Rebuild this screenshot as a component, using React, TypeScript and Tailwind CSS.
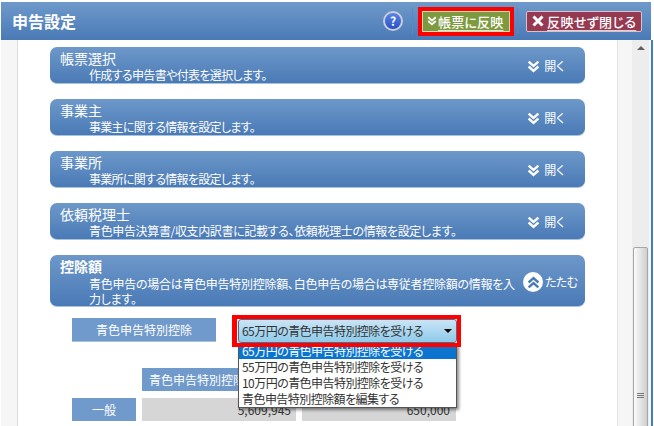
import React from "react";

const font = "[font-family:'Noto_Sans_CJK_JP','Noto_Sans',sans-serif] [font-feature-settings:'palt']";

function Chevrons({ up, className }: { up?: boolean; className?: string }) {
  return (
    <svg viewBox="0 0 12 12" className={className} fill="none" stroke="currentColor" strokeWidth="2.2">
      {up ? (
        <>
          <path d="M1.5 6 L6 2 L10.5 6" />
          <path d="M1.5 10.5 L6 6.5 L10.5 10.5" />
        </>
      ) : (
        <>
          <path d="M1.5 1.5 L6 5.5 L10.5 1.5" />
          <path d="M1.5 6 L6 10 L10.5 6" />
        </>
      )}
    </svg>
  );
}

function Section({ title, desc, track }: { title: string; desc: string; track: string }) {
  return (
    <div className="h-[37px] w-[535px] rounded-[7px] border-b border-[#a9c2de] bg-gradient-to-b from-[#6d98c9] to-[#4a7ab6] pl-[10px] pr-[21px] flex items-start justify-between text-white">
      <div className="flex flex-col">
        <div className="text-[14px] leading-[16px] mt-[3px]">{title}</div>
        <div className={`text-[12px] leading-[14px] ml-[29px] mt-[2px] ${track}`}>{desc}</div>
      </div>
      <div className="flex items-center gap-[4px] mt-[11px] text-[12px] tracking-[-0.3px] leading-[16px]">
        <Chevrons className="w-[13px] h-[13px]" />
        <span>開く</span>
      </div>
    </div>
  );
}

export default function App() {
  return (
    <div className={`w-[654px] h-[426px] overflow-hidden bg-white flex flex-col pt-[2px] pl-[1px] ${font}`}>
      <header className="h-[38px] w-[650px] shrink-0 bg-gradient-to-b from-[#6e99ca] to-[#4a7ab6] flex items-center pl-[11px] text-white">
        <h1 className="text-[16px] font-bold leading-none flex-1">申告設定</h1>
        <div className="w-[20px] h-[20px] rounded-full border-2 border-[#c9ced6] bg-gradient-to-b from-[#5a85ea] to-[#2a4fc4] text-[12px] font-bold leading-none flex items-center justify-center mr-[9px]">?</div>
        <div className="w-px h-[26px] bg-[#5f88ba] mr-[9px]" />
        <div className="outline-[4px] outline-[#ff0000] h-[21px] w-[88px] border border-[#cfd9b8] bg-[#7d9b3e] flex items-center pl-[4px] gap-[1px] text-[13px] tracking-[0.2px] font-medium leading-none mr-[7px]">
          <Chevrons className="w-[10px] h-[10px]" />
          <span className="underline underline-offset-[3px] decoration-[#dfe8c8]">帳票に反映</span>
        </div>
        <div className="w-px h-[26px] bg-[#5f88ba] mr-[8px]" />
        <div className="h-[21px] w-[116px] border border-[#d9c3cb] rounded-[2px] bg-[#963a52] flex items-center pl-[5px] gap-[3px] text-[13px] tracking-[0.4px] font-medium leading-none mr-[9px]">
          <svg viewBox="0 0 12 12" className="w-[12px] h-[12px] shrink-0" fill="none" stroke="currentColor" strokeWidth="3"><path d="M1.5 1.5 L10.5 10.5 M10.5 1.5 L1.5 10.5" /></svg>
          <span className="underline underline-offset-[3px] decoration-[#e6d0d6]">反映せず閉じる</span>
        </div>
      </header>
      <div className="flex flex-1 min-h-0 w-[652px]">
        <div className="w-[17px] shrink-0 bg-[#f6f6f6] border-r border-[#dcdcdc]" />
        <main className="w-[599px] shrink-0 pt-[7px] pl-[32px] flex flex-col">
          <div className="flex flex-col gap-[15px]">
            <Section track="tracking-[-0.65px]" title="帳票選択" desc="作成する申告書や付表を選択します。" />
            <Section track="tracking-[-0.7px]" title="事業主" desc="事業主に関する情報を設定します。" />
            <Section track="tracking-[-0.7px]" title="事業所" desc="事業所に関する情報を設定します。" />
            <Section track="tracking-[-0.35px]" title="依頼税理士" desc="青色申告決算書/収支内訳書に記載する、依頼税理士の情報を設定します。" />
            <div className="relative h-[52px] w-[535px] rounded-[7px] border-b border-[#a9c2de] bg-gradient-to-b from-[#6d98c9] to-[#4a7ab6] pl-[10px] pt-[3px] text-white">
              <div className="text-[14px] font-bold leading-[16px]">控除額</div>
              <div className="text-[12px] tracking-[-0.27px] leading-[15px] ml-[29px] mt-[2px] w-[430px]">青色申告の場合は青色申告特別控除額、白色申告の場合は専従者控除額の情報を入力します。</div>
              <div className="absolute left-[473px] top-[17px] flex items-center gap-[2px] text-[12px] tracking-[-0.6px] leading-none">
                <span className="w-[20px] h-[20px] rounded-full bg-white text-[#4a7ab6] flex items-center justify-center">
                  <Chevrons up className="w-[13px] h-[13px]" />
                </span>
                <span>たたむ</span>
              </div>
            </div>
          </div>
          <div className="relative flex-1">
            <div className="flex items-start mt-[11px] ml-[22px]">
              <div className="w-[144px] h-[24px] bg-[#7099cc] border-b border-[#a9c2de] text-white text-[12px] flex items-center justify-center">青色申告特別控除</div>
              <div className="relative z-10 ml-[16px] -mt-[3px] -mb-[5px] w-[229px] h-[32px] border-y-[4px] border-l-[5px] border-r-[4px] border-[#ff0000] bg-white">
                <div className="h-[24px] rounded-[3px] border border-[#4c6d8c] ml-px bg-gradient-to-b from-[#c9e5f6] to-[#8ecaea] flex items-center justify-between pl-[3px] pr-[4px] text-[12px] tracking-[-0.55px] text-[#333]">
                  <span>65万円の青色申告特別控除を受ける</span>
                  <span className="w-0 h-0 border-x-[4px] border-x-transparent border-t-[4px] border-t-black" />
                </div>
              </div>
            </div>
            <div className="ml-[92px] mt-[26px] w-[154px] h-[23px] bg-[#7099cc] text-white text-[12px] flex items-center pl-[7px] overflow-hidden whitespace-nowrap">青色申告特別控除額</div>
            <div className="flex mt-[7px] ml-[22px] gap-[6px] text-[12px] leading-none text-[#333]">
              <div className="w-[64px] h-[23px] bg-[#7099cc] text-white flex items-center justify-center">一般</div>
              <div className="w-[154px] h-[23px] bg-[#d6d6d6] flex items-center justify-end pr-[5px]">5,609,945</div>
              <div className="w-[154px] h-[23px] bg-[#d6d6d6] flex items-center justify-end pr-[6px]">650,000</div>
            </div>
            <ul className="absolute left-[188px] top-[36px] w-[219px] border border-[#555] border-t-0 bg-white text-[12px] tracking-[-0.55px] leading-[16px] text-[#333] shadow-[2px_2px_3px_rgba(0,0,0,0.45)]">
              <li className="h-[16px] bg-[#0a74cf] text-white pl-[3px]">65万円の青色申告特別控除を受ける</li>
              <li className="h-[16px] pl-[3px]">55万円の青色申告特別控除を受ける</li>
              <li className="h-[16px] pl-[3px]">10万円の青色申告特別控除を受ける</li>
              <li className="h-[16px] pl-[3px]">青色申告特別控除額を編集する</li>
            </ul>
          </div>
        </main>
        <aside className="w-[36px] shrink-0 bg-[#f6f6f6] border-l border-[#e2e2e2] border-r-2 border-r-[#3f7fc4] flex">
          <div className="ml-[14px] w-[17px] bg-[#ededed] flex flex-col items-center relative">
            <span className="mt-[6px] w-0 h-0 border-x-[4px] border-x-transparent border-b-[4px] border-b-[#606060]" />
            <div className="absolute left-px right-px top-[207px] h-[296px] bg-gradient-to-r from-[#fafafa] to-[#cfcfcf] border border-[#a6a6a6] rounded-[2px] flex items-center justify-center">
              <svg viewBox="0 0 7 5" className="w-[7px] h-[5px]" stroke="#777" strokeWidth="1"><path d="M0 0.5H7M0 2.5H7M0 4.5H7" /></svg>
            </div>
          </div>
        </aside>
      </div>
    </div>
  );
}
